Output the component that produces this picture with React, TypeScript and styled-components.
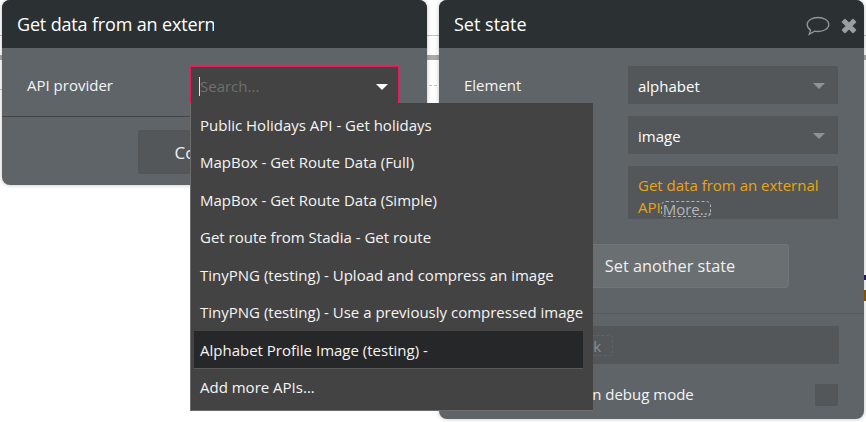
import React from "react";
import styled, { createGlobalStyle } from "styled-components";

const Global = createGlobalStyle`
  html, body { margin: 0; padding: 0; background: #fff; }
  body { font-family: "Open Sans", "Noto Sans", sans-serif; font-size: 15px; color: #f4f5f5; }
  * { box-sizing: border-box; }
`;

const Canvas = styled.div`
  position: relative;
  width: 866px;
  height: 422px;
  overflow: hidden;
  background: #fff;
`;

const BackLines = styled.div`
  display: flex;
  flex-direction: column;
  padding-top: 35px;
`;

const ThinLine = styled.div`
  height: 1px;
  background: #c4c4c4;
  margin-bottom: 19px;
`;

const Band = styled.div`
  height: 5px;
  background: #a9a9a9;
`;

const Speck = styled.span<{ $x: number; $y: number; $w: number; $h: number; $c: string }>`
  position: absolute;
  left: ${(p) => p.$x}px;
  top: ${(p) => p.$y}px;
  width: ${(p) => p.$w}px;
  height: ${(p) => p.$h}px;
  background: ${(p) => p.$c};
`;

const Panel = styled.section<{ $x: number; $h: number }>`
  position: absolute;
  left: ${(p) => p.$x}px;
  top: 0;
  width: 425px;
  height: ${(p) => p.$h}px;
  background: #5f6468;
  border-radius: 8px;
  box-shadow: 0 0 4px rgba(0, 0, 0, 0.25);
  overflow: hidden;
  display: flex;
  flex-direction: column;
`;

const Header = styled.header`
  height: 48px;
  flex: none;
  background: #2b3133;
  display: flex;
  align-items: center;
  padding: 0 7px 0 15px;
`;

const Title = styled.h2<{ $clip?: boolean }>`
  margin: 0;
  font-size: 18px;
  line-height: 24px;
  font-weight: 400;
  color: #fff;
  white-space: nowrap;
  ${(p) => p.$clip && "width: 197px; overflow: hidden; letter-spacing: -0.16px;"}
`;

const HeaderIcons = styled.div`
  margin-left: auto;
  display: flex;
  align-items: center;
  gap: 11px;
  padding-top: 3px;
`;

const Row = styled.div<{ $pad: string }>`
  display: flex;
  align-items: center;
  justify-content: space-between;
  padding: ${(p) => p.$pad};
`;

const Label = styled.label`
  font-size: 15px;
  line-height: 20px;
  color: #f4f5f5;
`;

const DebugLabel = styled(Label)`
  margin-bottom: 2px;
`;

const Field = styled.div`
  width: 210px;
  height: 38px;
  background: #53575a;
  display: flex;
  align-items: center;
  justify-content: space-between;
  padding: 2px 13px 0 10px;
  font-size: 15px;
  color: #fff;
`;

const Caret = styled.span<{ $c: string }>`
  width: 0;
  height: 0;
  border-left: 6px solid transparent;
  border-right: 6px solid transparent;
  border-top: 6px solid ${(p) => p.$c};
`;

const SearchBox = styled.div`
  width: 209px;
  height: 38px;
  background: #434343;
  border: 1px solid #e8185a;
  border-bottom: 0;
  display: flex;
  align-items: center;
  justify-content: space-between;
  padding: 2px 10px 0 8px;
`;

const Placeholder = styled.span`
  color: #6f6f6f;
  font-size: 15px;
  border-left: 1px solid #e8e8e8;
  line-height: 19px;
`;

const Divider = styled.hr<{ $c: string; $top?: number }>`
  margin: ${(p) => p.$top ?? 0}px 0 0;
  height: 1px;
  border: 0;
  background: ${(p) => p.$c};
`;

const Center = styled.div`
  display: flex;
  justify-content: center;
  padding: 13px 0 0;
`;

const PlainButton = styled.div`
  width: 153px;
  height: 44px;
  background: #53575a;
  display: flex;
  align-items: center;
  justify-content: center;
  padding-right: 8px;
  font-size: 17px;
  color: #f0f0f0;
`;

const Stack = styled.div`
  display: flex;
  flex-direction: column;
  gap: 12px;
  padding: 18px 26px 0 25px;
`;

const Line = styled.div`
  display: flex;
  align-items: center;
  justify-content: space-between;
`;

const ValueBox = styled.div`
  width: 210px;
  height: 53px;
  background: #53575a;
  padding: 8px 10px 0;
  font-size: 15px;
  line-height: 22px;
  color: #e9a50f;
  overflow: hidden;
`;

const More = styled.span`
  display: inline-block;
  height: 16px;
  width: 50px;
  line-height: 15px;
  vertical-align: -2px;
  color: #b2b4b6;
  font-size: 15px;
  border: 1px dashed #b2b4b6;
  border-radius: 5px;
  padding: 0 1px;
`;

const SecondaryButton = styled.div`
  width: 238px;
  height: 44px;
  margin: 25px 75px 0 auto;
  background: #6a6f72;
  border: 1px solid #70757a;
  border-radius: 3px;
  display: flex;
  align-items: center;
  justify-content: center;
  font-size: 16.3px;
  color: #f0f0f0;
`;

const ConditionBar = styled.div`
  height: 38px;
  margin: 12px 25px 0;
  background: #53575a;
  display: flex;
  align-items: center;
  padding-left: 93px;
`;

const Dashed = styled.span`
  height: 21px;
  padding: 0 11px;
  border: 1px dashed #5f6367;
  border-radius: 4px;
  color: #8a8c8e;
  line-height: 20px;
  font-size: 15px;
`;

const Check = styled.span`
  width: 23px;
  height: 22px;
  background: #53575a;
`;

const Menu = styled.ul`
  position: absolute;
  left: 190px;
  top: 103px;
  width: 403px;
  height: 308px;
  margin: 0;
  padding: 3px 10px 0 3px;
  list-style: none;
  background: #434343;
  border-left: 1px solid #6d6d6d;
  border-bottom: 1px solid #6d6d6d;
`;

const Item = styled.li<{ $active?: boolean }>`
  height: 37.5px;
  padding-left: 6px;
  padding-top: ${(p) => (p.$active ? "1px" : "0")};
  display: flex;
  align-items: center;
  font-size: 15px;
  color: #f5f5f5;
  white-space: nowrap;
  background: ${(p) => (p.$active ? "#262729" : "transparent")};
  border-bottom: ${(p) => (p.$active ? "1px solid #5a5a5a" : "0")};
`;

const items = [
  "Public Holidays API - Get holidays",
  "MapBox - Get Route Data (Full)",
  "MapBox - Get Route Data (Simple)",
  "Get route from Stadia - Get route",
  "TinyPNG (testing) - Upload and compress an image",
  "TinyPNG (testing) - Use a previously compressed image",
  "Alphabet Profile Image (testing) -",
  "Add more APIs...",
];

const Comment = () => (
  <svg width="24" height="20" viewBox="0 0 24 20" fill="none" stroke="#8f9699" strokeWidth="1.3">
    <path d="M12 1.500c6 0 10.800 2.900 10.800 7s-4.800 7-10.800 7c-1.200 0-2.400-.1-3.400-.4L3.200 18.400l1.400-4.300C2.500 12.800 1.200 10.800 1.200 8.500c0-4.100 4.800-7 10.800-7z" />
  </svg>
);

const Close = () => (
  <svg width="16" height="16" viewBox="0 0 16 16">
    <path
      d="M1.500 4 4 1.500 8 5.500 12 1.500 14.500 4 10.500 8 14.500 12 12 14.500 8 10.500 4 14.500 1.500 12 5.500 8z"
      fill="#98a0a3"
      stroke="#98a0a3"
      strokeWidth="1.500"
      strokeLinejoin="round"
    />
  </svg>
);

export default function App() {
  return (
    <Canvas>
      <Global />
      <BackLines>
        <ThinLine />
        <Band />
      </BackLines>
      <Speck $x={0} $y={89} $w={2} $h={1} $c="#c4c4c4" />
      <Speck $x={429} $y={85} $w={3} $h={1} $c="#c4c4c4" />
      <Speck $x={434} $y={85} $w={3} $h={1} $c="#c4c4c4" />
      <Speck $x={864} $y={275} $w={2} $h={5} $c="#2a1a6a" />
      <Speck $x={864} $y={290} $w={2} $h={11} $c="#8a5a10" />

      <Panel $x={2} $h={185}>
        <Header>
          <Title $clip>Get data from an external API</Title>
        </Header>
        <Row $pad="18px 28px 12px 25px">
          <Label>API provider</Label>
          <SearchBox>
            <Placeholder>Search...</Placeholder>
            <Caret $c="#fff" />
          </SearchBox>
        </Row>
        <Divider $c="#444749" />
        <Center>
          <PlainButton>Continue</PlainButton>
        </Center>
      </Panel>

      <Panel $x={439} $h={419}>
        <Header>
          <Title>Set state</Title>
          <HeaderIcons>
            <Comment />
            <Close />
          </HeaderIcons>
        </Header>
        <Stack>
          <Line>
            <Label>Element</Label>
            <Field>
              alphabet
              <Caret $c="#8f9396" />
            </Field>
          </Line>
          <Line>
            <Label>Custom state</Label>
            <Field>
              image
              <Caret $c="#8f9396" />
            </Field>
          </Line>
          <Line>
            <Label>Value</Label>
            <ValueBox>
              Get data from an external API<More>More...</More>
            </ValueBox>
          </Line>
        </Stack>
        <SecondaryButton>Set another state</SecondaryButton>
        <Divider $c="#575b5e" $top={25} />
        <ConditionBar>
          <Dashed>Click</Dashed>
        </ConditionBar>
        <Row $pad="20px 26px 0 25px">
          <DebugLabel>Add a breakpoint in debug mode</DebugLabel>
          <Check />
        </Row>
      </Panel>

      <Menu>
        {items.map((t, i) => (
          <Item key={t} $active={i === 6}>
            {t}
          </Item>
        ))}
      </Menu>
    </Canvas>
  );
}
